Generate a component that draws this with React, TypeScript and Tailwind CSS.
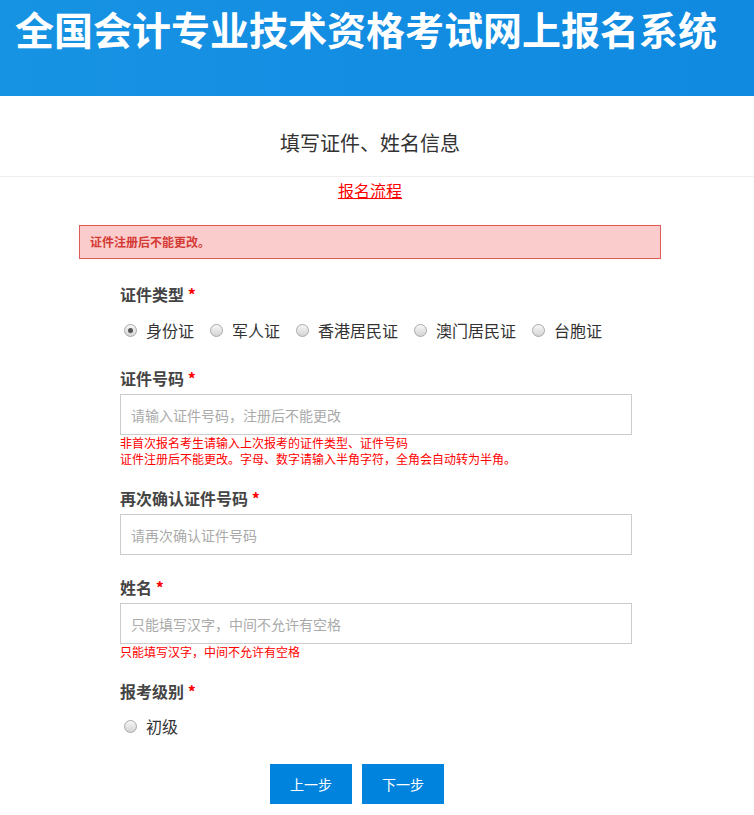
import React from "react";

const font = { fontFamily: '"Noto Sans CJK SC", "Noto Sans", sans-serif' };

function Radio({ label, checked = false }: { label: string; checked?: boolean }) {
  return (
    <label className="flex items-center">
      <span className="w-[13px] h-[13px] rounded-full border border-[#a9a9a9] bg-gradient-to-b from-[#f7f7f7] to-[#d4d4d4] flex items-center justify-center">
        {checked && <span className="w-[5px] h-[5px] rounded-full bg-[#555]" />}
      </span>
      <span className="ml-[9px] text-[16px] leading-[24px] text-[#333]">{label}</span>
    </label>
  );
}

function Label({ text, className = "" }: { text: string; className?: string }) {
  return (
    <div className={"text-[16px] leading-[24px] font-bold text-[#444] " + className}>
      {text} <span className="text-[#ff0000]">*</span>
    </div>
  );
}

function Field({ placeholder }: { placeholder: string }) {
  return (
    <input
      className="mt-[4px] block w-[512px] h-[41px] border border-[#cccccc] px-[10px] text-[14px] placeholder:text-[#aaaaaa] outline-none"
      placeholder={placeholder}
    />
  );
}

export default function App() {
  return (
    <div className="w-[754px] min-h-[815px] bg-white" style={font}>
      <div className="h-[96px] bg-gradient-to-r from-[#1793e3] via-[#138de2] to-[#0f8ae0] pl-[15px] pt-[8px]">
        <h1 className="text-[39px] leading-[41px] font-bold text-white whitespace-nowrap">
          全国会计专业技术资格考试网上报名系统
        </h1>
      </div>

      <div className="pt-[37px] pb-[23px] pr-[14px] border-b border-[#eeeeee] text-center text-[20px] leading-[20px] text-[#333]">
        填写证件、姓名信息
      </div>

      <div className="pt-[5px] pr-[14px] text-center text-[16px] leading-[16px]">
        <a href="#" className="text-[#ff0000] underline">报名流程</a>
      </div>

      <div className="mt-[27px] ml-[79px] w-[582px] h-[34px] border border-[#e15a55] bg-[#fbcccc] flex items-center pl-[10px] text-[12px] font-bold text-[#d43b35]">
        证件注册后不能更改。
      </div>

      <div className="pl-[120px]">
        <Label text="证件类型" className="mt-[23px]" />
        <div className="mt-[12px] flex items-center gap-[16px] pl-[4px]">
          <Radio label="身份证" checked />
          <Radio label="军人证" />
          <Radio label="香港居民证" />
          <Radio label="澳门居民证" />
          <Radio label="台胞证" />
        </div>

        <Label text="证件号码" className="mt-[24px]" />
        <Field placeholder="请输入证件号码，注册后不能更改" />
        <div className="text-[12px] leading-[16px] text-[#ff0000]">
          <div>非首次报名考生请输入上次报考的证件类型、证件号码</div>
          <div>证件注册后不能更改。字母、数字请输入半角字符，全角会自动转为半角。</div>
        </div>

        <Label text="再次确认证件号码" className="mt-[19px]" />
        <Field placeholder="请再次确认证件号码" />

        <Label text="姓名" className="mt-[20px]" />
        <Field placeholder="只能填写汉字，中间不允许有空格" />
        <div className="text-[12px] leading-[16px] text-[#ff0000]">只能填写汉字，中间不允许有空格</div>

        <Label text="报考级别" className="mt-[19px]" />
        <div className="mt-[11px] pl-[4px] flex">
          <Radio label="初级" />
        </div>

        <div className="mt-[26px] ml-[150px] flex gap-[10px] pb-[11px]">
          <button className="w-[82px] h-[40px] bg-[#0083dc] text-white text-[14px]">上一步</button>
          <button className="w-[82px] h-[40px] bg-[#0083dc] text-white text-[14px]">下一步</button>
        </div>
      </div>
    </div>
  );
}
